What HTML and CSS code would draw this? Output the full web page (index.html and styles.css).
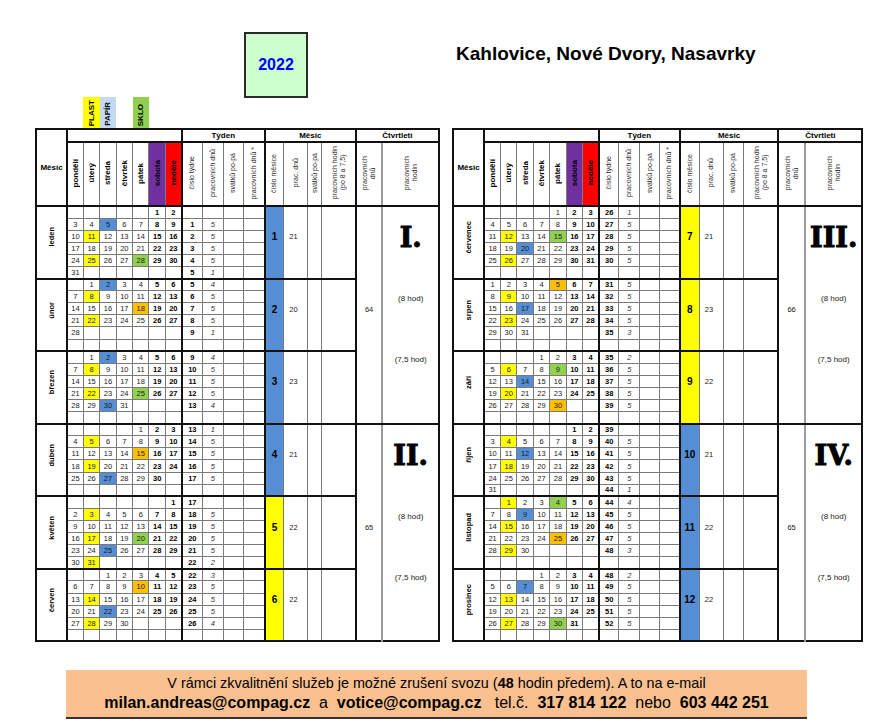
FILE: index.html
```html
<!DOCTYPE html>
<html lang="cs">
<head>
<meta charset="utf-8">
<title>Kalendář svozu 2022</title>
<link rel="stylesheet" href="styles.css">
</head>
<body>
<div class="page">
  <div class="top">
    <div class="legend">
      <div class="lg lg-plast"><span class="v">PLAST</span></div>
      <div class="lg lg-papir"><span class="v">PAPÍR</span></div>
      <div class="lg"></div>
      <div class="lg lg-sklo"><span class="v">SKLO</span></div>
    </div>
    <div class="year">2022</div>
    <div class="title">Kahlovice, Nové Dvory, Nasavrky</div>
  </div>

  <div class="tables">
    <table class="cal cal-l">
      <colgroup>
        <col class="c-mes"><col class="c-d"><col class="c-d"><col class="c-d"><col class="c-d"><col class="c-d"><col class="c-d"><col class="c-d c-sun">
        <col class="c-t1"><col class="c-t2"><col class="c-t3"><col class="c-t4">
        <col class="c-m1"><col class="c-m2"><col class="c-m3"><col class="c-m4">
        <col class="c-q1"><col class="c-q2">
      </colgroup>
      <thead>
        <tr class="h1"><th class="th-mes" rowspan="2">Měsíc</th><th colspan="7"></th><th colspan="4">Týden</th><th colspan="4">Měsíc</th><th colspan="2">Čtvrtletí</th></tr>
        <tr class="h2">
          <th><span class="v dl">pondělí</span></th>
          <th><span class="v dl">úterý</span></th>
          <th><span class="v dl">středa</span></th>
          <th><span class="v dl">čtvrtek</span></th>
          <th><span class="v dl">pátek</span></th>
          <th class="h-sat"><span class="v dl">sobota</span></th>
          <th class="h-sun"><span class="v dl">neděle</span></th>
          <th><span class="v sl">číslo týdne</span></th>
          <th><span class="v sl">pracovních dnů</span></th>
          <th><span class="v sl">svátků po-pá</span></th>
          <th><span class="v sl">pracovních dnů *</span></th>
          <th><span class="v sl">číslo měsíce</span></th>
          <th><span class="v sl">prac. dnů</span></th>
          <th><span class="v sl">svátků po-pá</span></th>
          <th><span class="v sl">pracovních hodin<br>(po 8 a 7,5)</span></th>
          <th><span class="v sl">pracovních<br>dnů</span></th>
          <th><span class="v sl">pracovních<br>hodin</span></th>
        </tr>
      </thead>
      <tbody>
        <tr class="m"><td class="mn" rowspan="6"><span class="v">leden</span></td><td></td><td></td><td></td><td></td><td></td><td>1</td><td>2</td><td></td><td></td><td></td><td></td><td class="mno bl" rowspan="6">1</td><td class="mpd" rowspan="6">21</td><td rowspan="6"></td><td rowspan="6"></td><td class="qd" rowspan="18">64</td><td class="qh" rowspan="18"><div class="q"><span class="rn">I.</span><span class="h8">(8 hod)</span><span class="h75">(7,5 hod)</span></div></td></tr>
        <tr><td>3</td><td>4</td><td class="b">5</td><td>6</td><td>7</td><td>8</td><td>9</td><td>1</td><td>5</td><td></td><td></td></tr>
        <tr><td>10</td><td class="y">11</td><td>12</td><td>13</td><td>14</td><td>15</td><td>16</td><td>2</td><td>5</td><td></td><td></td></tr>
        <tr><td>17</td><td>18</td><td>19</td><td>20</td><td>21</td><td>22</td><td>23</td><td>3</td><td>5</td><td></td><td></td></tr>
        <tr><td>24</td><td class="y">25</td><td>26</td><td>27</td><td class="g">28</td><td>29</td><td>30</td><td>4</td><td>5</td><td></td><td></td></tr>
        <tr><td>31</td><td></td><td></td><td></td><td></td><td></td><td></td><td>5</td><td>1</td><td></td><td></td></tr>

        <tr class="m"><td class="mn" rowspan="6"><span class="v">únor</span></td><td></td><td>1</td><td class="b">2</td><td>3</td><td>4</td><td>5</td><td>6</td><td>5</td><td>4</td><td></td><td></td><td class="mno bl" rowspan="6">2</td><td class="mpd" rowspan="6">20</td><td rowspan="6"></td><td rowspan="6"></td></tr>
        <tr><td>7</td><td class="y">8</td><td>9</td><td>10</td><td>11</td><td>12</td><td>13</td><td>6</td><td>5</td><td></td><td></td></tr>
        <tr><td>14</td><td>15</td><td>16</td><td>17</td><td class="o">18</td><td>19</td><td>20</td><td>7</td><td>5</td><td></td><td></td></tr>
        <tr><td>21</td><td class="y">22</td><td>23</td><td>24</td><td>25</td><td>26</td><td>27</td><td>8</td><td>5</td><td></td><td></td></tr>
        <tr><td>28</td><td></td><td></td><td></td><td></td><td></td><td></td><td>9</td><td>1</td><td></td><td></td></tr>
        <tr><td></td><td></td><td></td><td></td><td></td><td></td><td></td><td></td><td></td><td></td><td></td></tr>

        <tr class="m"><td class="mn" rowspan="6"><span class="v">březen</span></td><td></td><td>1</td><td class="b">2</td><td>3</td><td>4</td><td>5</td><td>6</td><td>9</td><td>4</td><td></td><td></td><td class="mno bl" rowspan="6">3</td><td class="mpd" rowspan="6">23</td><td rowspan="6"></td><td rowspan="6"></td></tr>
        <tr><td>7</td><td class="y">8</td><td>9</td><td>10</td><td>11</td><td>12</td><td>13</td><td>10</td><td>5</td><td></td><td></td></tr>
        <tr><td>14</td><td>15</td><td>16</td><td>17</td><td>18</td><td>19</td><td>20</td><td>11</td><td>5</td><td></td><td></td></tr>
        <tr><td>21</td><td class="y">22</td><td>23</td><td>24</td><td class="g">25</td><td>26</td><td>27</td><td>12</td><td>5</td><td></td><td></td></tr>
        <tr><td>28</td><td>29</td><td class="b">30</td><td>31</td><td></td><td></td><td></td><td>13</td><td>4</td><td></td><td></td></tr>
        <tr><td></td><td></td><td></td><td></td><td></td><td></td><td></td><td></td><td></td><td></td><td></td></tr>

        <tr class="m"><td class="mn" rowspan="6"><span class="v">duben</span></td><td></td><td></td><td></td><td></td><td>1</td><td>2</td><td>3</td><td>13</td><td>1</td><td></td><td></td><td class="mno bl" rowspan="6">4</td><td class="mpd" rowspan="6">21</td><td rowspan="6"></td><td rowspan="6"></td><td class="qd" rowspan="18">65</td><td class="qh" rowspan="18"><div class="q"><span class="rn">II.</span><span class="h8">(8 hod)</span><span class="h75">(7,5 hod)</span></div></td></tr>
        <tr><td>4</td><td class="y">5</td><td>6</td><td>7</td><td>8</td><td>9</td><td>10</td><td>14</td><td>5</td><td></td><td></td></tr>
        <tr><td>11</td><td>12</td><td>13</td><td>14</td><td class="o">15</td><td>16</td><td>17</td><td>15</td><td>5</td><td></td><td></td></tr>
        <tr><td>18</td><td class="y">19</td><td>20</td><td>21</td><td>22</td><td>23</td><td>24</td><td>16</td><td>5</td><td></td><td></td></tr>
        <tr><td>25</td><td>26</td><td class="b">27</td><td>28</td><td>29</td><td>30</td><td></td><td>17</td><td>5</td><td></td><td></td></tr>
        <tr><td></td><td></td><td></td><td></td><td></td><td></td><td></td><td></td><td></td><td></td><td></td></tr>

        <tr class="m"><td class="mn" rowspan="6"><span class="v">květen</span></td><td></td><td></td><td></td><td></td><td></td><td></td><td>1</td><td>17</td><td></td><td></td><td></td><td class="mno ye" rowspan="6">5</td><td class="mpd" rowspan="6">22</td><td rowspan="6"></td><td rowspan="6"></td></tr>
        <tr><td>2</td><td class="y">3</td><td>4</td><td>5</td><td>6</td><td>7</td><td>8</td><td>18</td><td>5</td><td></td><td></td></tr>
        <tr><td>9</td><td>10</td><td>11</td><td>12</td><td>13</td><td>14</td><td>15</td><td>19</td><td>5</td><td></td><td></td></tr>
        <tr><td>16</td><td class="y">17</td><td>18</td><td>19</td><td class="g">20</td><td>21</td><td>22</td><td>20</td><td>5</td><td></td><td></td></tr>
        <tr><td>23</td><td>24</td><td class="b">25</td><td>26</td><td>27</td><td>28</td><td>29</td><td>21</td><td>5</td><td></td><td></td></tr>
        <tr><td>30</td><td class="y">31</td><td></td><td></td><td></td><td></td><td></td><td>22</td><td>2</td><td></td><td></td></tr>

        <tr class="m"><td class="mn" rowspan="6"><span class="v">červen</span></td><td></td><td></td><td>1</td><td>2</td><td>3</td><td>4</td><td>5</td><td>22</td><td>3</td><td></td><td></td><td class="mno ye" rowspan="6">6</td><td class="mpd" rowspan="6">22</td><td rowspan="6"></td><td rowspan="6"></td></tr>
        <tr><td>6</td><td>7</td><td>8</td><td>9</td><td class="o">10</td><td>11</td><td>12</td><td>23</td><td>5</td><td></td><td></td></tr>
        <tr><td>13</td><td class="y">14</td><td>15</td><td>16</td><td>17</td><td>18</td><td>19</td><td>24</td><td>5</td><td></td><td></td></tr>
        <tr><td>20</td><td>21</td><td class="b">22</td><td>23</td><td>24</td><td>25</td><td>26</td><td>25</td><td>5</td><td></td><td></td></tr>
        <tr><td>27</td><td class="y">28</td><td>29</td><td>30</td><td></td><td></td><td></td><td>26</td><td>4</td><td></td><td></td></tr>
        <tr><td></td><td></td><td></td><td></td><td></td><td></td><td></td><td></td><td></td><td></td><td></td></tr>
      </tbody>
    </table>

    <table class="cal cal-r">
      <colgroup>
        <col class="c-mes"><col class="c-d"><col class="c-d"><col class="c-d"><col class="c-d"><col class="c-d"><col class="c-d"><col class="c-d c-sun">
        <col class="c-t1"><col class="c-t2"><col class="c-t3"><col class="c-t4">
        <col class="c-m1"><col class="c-m2"><col class="c-m3"><col class="c-m4">
        <col class="c-q1"><col class="c-q2">
      </colgroup>
      <thead>
        <tr class="h1"><th class="th-mes" rowspan="2">Měsíc</th><th colspan="7"></th><th colspan="4">Týden</th><th colspan="4">Měsíc</th><th colspan="2">Čtvrtletí</th></tr>
        <tr class="h2">
          <th><span class="v dl">pondělí</span></th>
          <th><span class="v dl">úterý</span></th>
          <th><span class="v dl">středa</span></th>
          <th><span class="v dl">čtvrtek</span></th>
          <th><span class="v dl">pátek</span></th>
          <th class="h-sat"><span class="v dl">sobota</span></th>
          <th class="h-sun"><span class="v dl">neděle</span></th>
          <th><span class="v sl">číslo týdne</span></th>
          <th><span class="v sl">pracovních dnů</span></th>
          <th><span class="v sl">svátků po-pá</span></th>
          <th><span class="v sl">pracovních dnů *</span></th>
          <th><span class="v sl">číslo měsíce</span></th>
          <th><span class="v sl">prac. dnů</span></th>
          <th><span class="v sl">svátků po-pá</span></th>
          <th><span class="v sl">pracovních hodin<br>(po 8 a 7,5)</span></th>
          <th><span class="v sl">pracovních<br>dnů</span></th>
          <th><span class="v sl">pracovních<br>hodin</span></th>
        </tr>
      </thead>
      <tbody>
        <tr class="m"><td class="mn" rowspan="6"><span class="v">červenec</span></td><td></td><td></td><td></td><td></td><td>1</td><td>2</td><td>3</td><td>26</td><td>1</td><td></td><td></td><td class="mno ye" rowspan="6">7</td><td class="mpd" rowspan="6">21</td><td rowspan="6"></td><td rowspan="6"></td><td class="qd" rowspan="18">66</td><td class="qh" rowspan="18"><div class="q"><span class="rn">III.</span><span class="h8">(8 hod)</span><span class="h75">(7,5 hod)</span></div></td></tr>
        <tr><td>4</td><td>5</td><td>6</td><td>7</td><td>8</td><td>9</td><td>10</td><td>27</td><td>5</td><td></td><td></td></tr>
        <tr><td>11</td><td class="y">12</td><td>13</td><td>14</td><td class="g">15</td><td>16</td><td>17</td><td>28</td><td>5</td><td></td><td></td></tr>
        <tr><td>18</td><td>19</td><td class="b">20</td><td>21</td><td>22</td><td>23</td><td>24</td><td>29</td><td>5</td><td></td><td></td></tr>
        <tr><td>25</td><td class="y">26</td><td>27</td><td>28</td><td>29</td><td>30</td><td>31</td><td>30</td><td>5</td><td></td><td></td></tr>
        <tr><td></td><td></td><td></td><td></td><td></td><td></td><td></td><td></td><td></td><td></td><td></td></tr>

        <tr class="m"><td class="mn" rowspan="6"><span class="v">srpen</span></td><td>1</td><td>2</td><td>3</td><td>4</td><td class="o">5</td><td>6</td><td>7</td><td>31</td><td>5</td><td></td><td></td><td class="mno ye" rowspan="6">8</td><td class="mpd" rowspan="6">23</td><td rowspan="6"></td><td rowspan="6"></td></tr>
        <tr><td>8</td><td class="y">9</td><td>10</td><td>11</td><td>12</td><td>13</td><td>14</td><td>32</td><td>5</td><td></td><td></td></tr>
        <tr><td>15</td><td>16</td><td class="b">17</td><td>18</td><td>19</td><td>20</td><td>21</td><td>33</td><td>5</td><td></td><td></td></tr>
        <tr><td>22</td><td class="y">23</td><td>24</td><td>25</td><td>26</td><td>27</td><td>28</td><td>34</td><td>5</td><td></td><td></td></tr>
        <tr><td>29</td><td>30</td><td>31</td><td></td><td></td><td></td><td></td><td>35</td><td>3</td><td></td><td></td></tr>
        <tr><td></td><td></td><td></td><td></td><td></td><td></td><td></td><td></td><td></td><td></td><td></td></tr>

        <tr class="m"><td class="mn" rowspan="6"><span class="v">září</span></td><td></td><td></td><td></td><td>1</td><td>2</td><td>3</td><td>4</td><td>35</td><td>2</td><td></td><td></td><td class="mno ye" rowspan="6">9</td><td class="mpd" rowspan="6">22</td><td rowspan="6"></td><td rowspan="6"></td></tr>
        <tr><td>5</td><td class="y">6</td><td>7</td><td>8</td><td class="g">9</td><td>10</td><td>11</td><td>36</td><td>5</td><td></td><td></td></tr>
        <tr><td>12</td><td>13</td><td class="b">14</td><td>15</td><td>16</td><td>17</td><td>18</td><td>37</td><td>5</td><td></td><td></td></tr>
        <tr><td>19</td><td class="y">20</td><td>21</td><td>22</td><td>23</td><td>24</td><td>25</td><td>38</td><td>5</td><td></td><td></td></tr>
        <tr><td>26</td><td>27</td><td>28</td><td>29</td><td class="o">30</td><td></td><td></td><td>39</td><td>5</td><td></td><td></td></tr>
        <tr><td></td><td></td><td></td><td></td><td></td><td></td><td></td><td></td><td></td><td></td><td></td></tr>

        <tr class="m"><td class="mn" rowspan="6"><span class="v">říjen</span></td><td></td><td></td><td></td><td></td><td></td><td>1</td><td>2</td><td>39</td><td></td><td></td><td></td><td class="mno bl" rowspan="6">10</td><td class="mpd" rowspan="6">21</td><td rowspan="6"></td><td rowspan="6"></td><td class="qd" rowspan="18">65</td><td class="qh" rowspan="18"><div class="q"><span class="rn">IV.</span><span class="h8">(8 hod)</span><span class="h75">(7,5 hod)</span></div></td></tr>
        <tr><td>3</td><td class="y">4</td><td>5</td><td>6</td><td>7</td><td>8</td><td>9</td><td>40</td><td>5</td><td></td><td></td></tr>
        <tr><td>10</td><td>11</td><td class="b">12</td><td>13</td><td>14</td><td>15</td><td>16</td><td>41</td><td>5</td><td></td><td></td></tr>
        <tr><td>17</td><td class="y">18</td><td>19</td><td>20</td><td>21</td><td>22</td><td>23</td><td>42</td><td>5</td><td></td><td></td></tr>
        <tr><td>24</td><td>25</td><td>26</td><td>27</td><td>28</td><td>29</td><td>30</td><td>43</td><td>5</td><td></td><td></td></tr>
        <tr><td>31</td><td></td><td></td><td></td><td></td><td></td><td></td><td>44</td><td>1</td><td></td><td></td></tr>

        <tr class="m"><td class="mn" rowspan="6"><span class="v">listopad</span></td><td></td><td class="y">1</td><td>2</td><td>3</td><td class="g">4</td><td>5</td><td>6</td><td>44</td><td>4</td><td></td><td></td><td class="mno bl" rowspan="6">11</td><td class="mpd" rowspan="6">22</td><td rowspan="6"></td><td rowspan="6"></td></tr>
        <tr><td>7</td><td>8</td><td class="b">9</td><td>10</td><td>11</td><td>12</td><td>13</td><td>45</td><td>5</td><td></td><td></td></tr>
        <tr><td>14</td><td class="y">15</td><td>16</td><td>17</td><td>18</td><td>19</td><td>20</td><td>46</td><td>5</td><td></td><td></td></tr>
        <tr><td>21</td><td>22</td><td>23</td><td>24</td><td class="o">25</td><td>26</td><td>27</td><td>47</td><td>5</td><td></td><td></td></tr>
        <tr><td>28</td><td class="y">29</td><td>30</td><td></td><td></td><td></td><td></td><td>48</td><td>3</td><td></td><td></td></tr>
        <tr><td></td><td></td><td></td><td></td><td></td><td></td><td></td><td></td><td></td><td></td><td></td></tr>

        <tr class="m"><td class="mn" rowspan="6"><span class="v">prosinec</span></td><td></td><td></td><td></td><td>1</td><td>2</td><td>3</td><td>4</td><td>48</td><td>2</td><td></td><td></td><td class="mno bl" rowspan="6">12</td><td class="mpd" rowspan="6">22</td><td rowspan="6"></td><td rowspan="6"></td></tr>
        <tr><td>5</td><td>6</td><td class="b">7</td><td>8</td><td>9</td><td>10</td><td>11</td><td>49</td><td>5</td><td></td><td></td></tr>
        <tr><td>12</td><td class="y">13</td><td>14</td><td>15</td><td>16</td><td>17</td><td>18</td><td>50</td><td>5</td><td></td><td></td></tr>
        <tr><td>19</td><td>20</td><td>21</td><td>22</td><td>23</td><td>24</td><td>25</td><td>51</td><td>5</td><td></td><td></td></tr>
        <tr><td>26</td><td class="y">27</td><td>28</td><td>29</td><td class="g">30</td><td>31</td><td></td><td>52</td><td>5</td><td></td><td></td></tr>
        <tr><td></td><td></td><td></td><td></td><td></td><td></td><td></td><td></td><td></td><td></td><td></td></tr>
      </tbody>
    </table>
  </div>

  <div class="note">
    <div class="n1">V rámci zkvalitnění služeb je možné zrušení svozu (<b>48</b> hodin předem). A to na e-mail</div>
    <div class="n2"><b>milan.andreas@compag.cz</b>  a  <b>votice@compag.cz</b>   tel.č.  <b>317 814 122</b>  nebo  <b>603 442 251</b></div>
  </div>
</div>
</body>
</html>
```

FILE: styles.css
```css
* { box-sizing: border-box; }

body {
  margin: 0;
  font-family: "Liberation Sans", Arial, sans-serif;
  color: #000;
  background: #fff;
}

.page {
  width: 886px;
  padding-left: 35px;
}

/* ---------- top ---------- */
.top {
  display: flex;
  align-items: flex-start;
  height: 128px;
}

.legend {
  display: flex;
  align-self: flex-end;
  margin-left: 48px;
}

.lg {
  width: 16.5px;
  height: 31px;
  display: flex;
  justify-content: center;
  align-items: flex-end;
  padding-bottom: 2px;
  font-size: 8px;
  font-weight: bold;
  line-height: 9px;
}

.lg-plast { background: #ffff00; }
.lg-papir { background: #c5d9f1; }
.lg-sklo { background: #92d050; }

.year {
  margin-left: 95px;
  margin-top: 32px;
  width: 64px;
  height: 66px;
  border: 2px solid #2a2a2a;
  background: #ccffcc;
  display: flex;
  align-items: center;
  justify-content: center;
  color: #0000ff;
  font-weight: bold;
  font-size: 16px;
}

.title {
  margin-left: 148px;
  margin-top: 43px;
  font-size: 19px;
  line-height: 22px;
  font-weight: bold;
  white-space: nowrap;
}

/* ---------- tables ---------- */
.tables {
  display: flex;
  align-items: flex-start;
  gap: 12px;
}

.cal {
  border-collapse: collapse;
  table-layout: fixed;
  border: 2px solid #111;
}

.cal-l { width: 403px; }
.cal-r { width: 409.5px; }

.cal td,
.cal th {
  border: 1px solid #7a7a7a;
  padding: 0;
  text-align: center;
  vertical-align: middle;
  font-size: 7.5px;
  line-height: 9px;
  font-weight: normal;
  color: #1a1a1a;
}

/* column widths */
.cal-l .c-mes { width: 31px; }
.cal-l .c-d { width: 16.4px; }
.cal-l .c-t1 { width: 20.7px; }
.cal-l .c-t2 { width: 20.6px; }
.cal-l .c-t3 { width: 20.9px; }
.cal-l .c-t4 { width: 20.8px; }
.cal-l .c-m1 { width: 19px; }
.cal-l .c-m2 { width: 23.8px; }
.cal-l .c-m3 { width: 14.4px; }
.cal-l .c-m4 { width: 33.8px; }
.cal-l .c-q1 { width: 26.6px; }
.cal-l .c-q2 { width: 56.6px; }

.cal-r .c-mes { width: 31.2px; }
.cal-r .c-d { width: 16.4px; }
.cal-r .c-t1 { width: 20px; }
.cal-r .c-t2 { width: 20.6px; }
.cal-r .c-t3 { width: 20px; }
.cal-r .c-t4 { width: 20.2px; }
.cal-r .c-m1 { width: 19.6px; }
.cal-r .c-m2 { width: 24.2px; }
.cal-r .c-m3 { width: 20px; }
.cal-r .c-m4 { width: 34.8px; }
.cal-r .c-q1 { width: 26.6px; }
.cal-r .c-q2 { width: 57.5px; }

/* thick separators */
.c-mes, .c-sun, .c-t4, .c-m4 { border-right: 2px solid #111; }
.c-q1 { border-right: 2px solid #9a9a9a; }

/* header */
.h1 { height: 13px; }
.h1 th {
  border-bottom: 2px solid #111;
  font-weight: bold;
  font-size: 8px;
  color: #000;
}
.h2 { height: 64px; }
.h2 th { border-bottom: 2px solid #111; }

.cal .th-mes {
  font-weight: bold;
  font-size: 8px;
  color: #000;
  border-bottom: 2px solid #111;
}

.h-sat { background: #7030a0; }
.cal .h-sun { background: #ff0000; }

.v {
  display: inline-block;
  writing-mode: vertical-rl;
  transform: rotate(180deg);
  white-space: nowrap;
}

.dl {
  font-weight: bold;
  font-size: 8px;
  line-height: 9px;
  color: #000;
}

.sl {
  font-size: 7px;
  line-height: 8px;
  color: #2a2a2a;
}

/* body rows */
.cal tbody tr { height: 12.1px; }
.cal tr.m > td { border-top: 2px solid #111; }

.cal tbody tr:not(.m) > td:nth-child(n+6):nth-child(-n+8),
.cal tbody tr.m > td:nth-child(n+7):nth-child(-n+9) {
  font-weight: bold;
  color: #000;
}

.cal tbody tr:not(.m) > td:nth-child(9),
.cal tbody tr.m > td:nth-child(10) {
  font-style: italic;
  color: #333;
}

.cal .mn { padding-bottom: 8px; }
.mn .v {
  font-weight: bold;
  font-size: 7.5px;
  line-height: 9px;
  color: #000;
}

.cal .mno {
  font-size: 10px;
  font-weight: bold;
  color: #000;
  padding-bottom: 11px;
}

.cal .mpd {
  text-align: left;
  padding-left: 5px;
  padding-bottom: 11px;
}

.cal .qd { padding-bottom: 11px; }
.cal .qh { vertical-align: top; }

.q {
  display: flex;
  flex-direction: column;
  align-items: center;
}

.rn {
  font-family: "DejaVu Serif", serif;
  font-weight: bold;
  font-size: 27px;
  line-height: 30px;
  margin-top: 16px;
  color: #000;
  -webkit-text-stroke: 1px #000;
}

.h8 {
  font-size: 8px;
  line-height: 12px;
  margin-top: 40px;
}

.h75 {
  font-size: 8px;
  line-height: 12px;
  margin-top: 49px;
}

/* highlights */
.bl { background: #558ed5; }
.ye { background: #ffff00; }
.cal .y { background: #ffff00; }
.cal .b { background: #558ed5; }
.cal .g { background: #92d050; }
.cal .o { background: #ffc000; }

/* ---------- footer note ---------- */
.note {
  margin-top: 28px;
  margin-left: 31px;
  width: 741px;
  background: #fac090;
  border-bottom: 2px solid #333;
  padding: 4px 0;
  text-align: center;
}

.n1 {
  font-size: 14.4px;
  line-height: 19px;
}

.n2 {
  font-size: 16px;
  line-height: 20px;
  white-space: pre;
}
```
